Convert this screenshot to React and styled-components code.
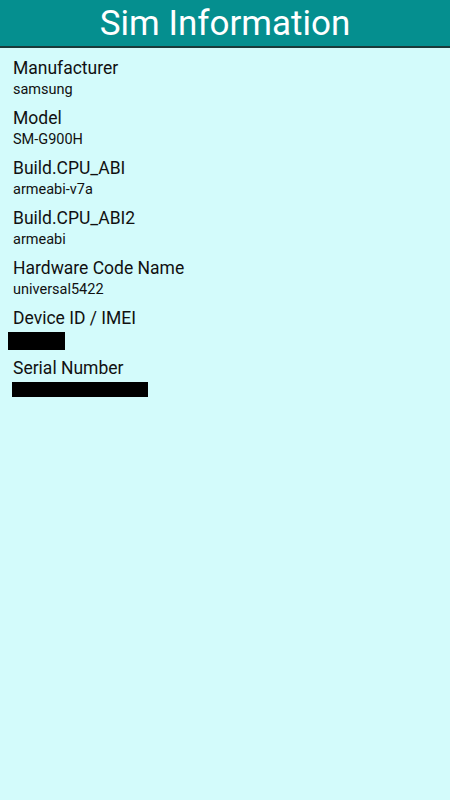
import React from 'react'
import styled, { createGlobalStyle } from 'styled-components'

const GlobalStyle = createGlobalStyle`
  html, body {
    margin: 0;
    padding: 0;
    background: #d3fbfb;
  }
  body {
    font-family: Roboto, "Liberation Sans", sans-serif;
  }
`

const rows = [
  { label: 'Manufacturer', value: 'samsung' },
  { label: 'Model', value: 'SM-G900H' },
  { label: 'Build.CPU_ABI', value: 'armeabi-v7a' },
  { label: 'Build.CPU_ABI2', value: 'armeabi' },
  { label: 'Hardware Code Name', value: 'universal5422' },
  { label: 'Device ID / IMEI', redacted: { width: 57, height: 18, shift: -5 } },
  { label: 'Serial Number', redacted: { width: 136, height: 15, shift: -1 } }
]

export default function App() {
  return (
    <Page>
      <GlobalStyle />
      <Header>Sim Information</Header>
      <List>
        {rows.map(r => (
          <Item key={r.label}>
            <Label>{r.label}</Label>
            {r.redacted ? (
              <Redacted
                style={{ width: r.redacted.width, height: r.redacted.height, marginLeft: r.redacted.shift }}
              />
            ) : (
              <Value>{r.value}</Value>
            )}
          </Item>
        ))}
      </List>
    </Page>
  )
}

const Page = styled.div`
  width: 450px;
  min-height: 800px;
  background: #d3fbfb;
`

const Header = styled.div`
  height: 46px;
  background: #058f8f;
  border-bottom: 2px solid #1a3a3a;
  color: #ffffff;
  font-size: 35px;
  line-height: 48px;
  text-align: center;
`

const List = styled.div`
  display: flex;
  flex-direction: column;
  padding: 9px 13px;
`

const Item = styled.div`
  display: flex;
  flex-direction: column;
  align-items: flex-start;
  height: 50px;
`

const Label = styled.div`
  font-size: 17.5px;
  line-height: 22px;
  color: #111;
`

const Value = styled.div`
  font-size: 14.5px;
  line-height: 22px;
  color: #111;
`

const Redacted = styled.div`
  background: #000;
  margin-top: 3px;
`
